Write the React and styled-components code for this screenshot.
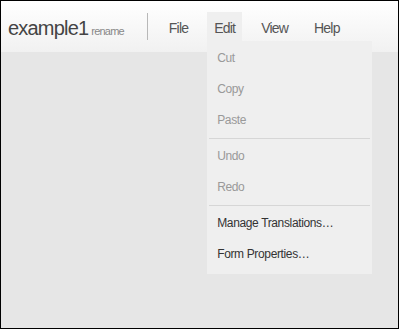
import { Fragment } from 'react'
import styled, { createGlobalStyle } from 'styled-components'

const Global = createGlobalStyle`
  body {
    margin: 0;
    font-family: "Liberation Sans", Arial, sans-serif;
  }
`

const menus = ['File', 'Edit', 'View', 'Help']

const editItems = [
  [{ label: 'Cut', off: true }, { label: 'Copy', off: true }, { label: 'Paste', off: true }],
  [{ label: 'Undo', off: true }, { label: 'Redo', off: true }],
  [{ label: 'Manage Translations…' }, { label: 'Form Properties…' }],
]

export default function App() {
  return <Window>
    <Global />
    <Header>
      <Title>
        <Name>example1</Name>
        <Rename>rename</Rename>
      </Title>
      <Divider />
      <Nav>
        {menus.map(m => <MenuItem key={m} $open={m === 'Edit'}>
          {m}
          {m === 'Edit' && <Dropdown>
            {editItems.map((group, i) => <Fragment key={i}>
              {i > 0 && <Separator />}
              {group.map(it => <Item key={it.label} $off={it.off}>{it.label}</Item>)}
            </Fragment>)}
          </Dropdown>}
        </MenuItem>)}
      </Nav>
    </Header>
    <Body />
  </Window>
}

const Window = styled.div`
  width: 399px;
  height: 329px;
  box-sizing: border-box;
  border: 1px solid #000;
  display: flex;
  flex-direction: column;
  background: #e6e6e6;
  letter-spacing: -0.05em;
`
const Header = styled.div`
  height: 51px;
  flex-shrink: 0;
  display: flex;
  align-items: center;
  padding-left: 7px;
  background: linear-gradient(#ffffff, #f1f1f1);
`
const Title = styled.div`
  display: flex;
  align-items: baseline;
  gap: 3px;
  padding-top: 3px;
`
const Name = styled.span`
  font-size: 20px;
  color: #444;
`
const Rename = styled.span`
  font-size: 11px;
  color: #888;
`
const Divider = styled.div`
  width: 1px;
  height: 27px;
  background: #b8b8b8;
  margin-left: 23px;
`
const Nav = styled.div`
  display: flex;
  margin-left: 14px;
  gap: 12px;
`
const MenuItem = styled.div`
  position: relative;
  height: 29px;
  box-sizing: border-box;
  padding: 3px 7px 0;
  line-height: 26px;
  font-size: 14px;
  color: #555;
  background: ${p => p.$open ? '#efefef' : 'transparent'};
`
const Dropdown = styled.div`
  position: absolute;
  top: 100%;
  left: 0;
  width: 165px;
  padding: 2px 0 4px;
  background: #efefef;
  z-index: 2;
`
const Separator = styled.div`
  height: 1px;
  margin: 2px 2px;
  background: #d6d6d6;
`
const Item = styled.div`
  height: 31px;
  line-height: 31px;
  padding-left: 10px;
  font-size: 12px;
  letter-spacing: -0.03em;
  color: ${p => p.$off ? '#999' : '#333'};
  white-space: nowrap;
`
const Body = styled.div`
  flex: 1;
  background: #e6e6e6;
`
